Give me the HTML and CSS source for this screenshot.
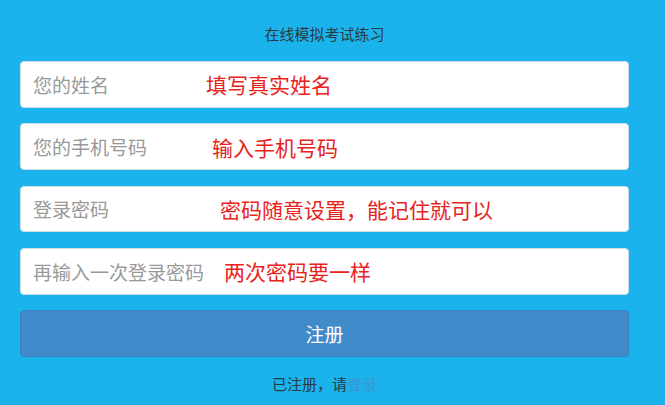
FILE: index.html
```html
<!DOCTYPE html>
<html lang="zh-CN">
<head>
<meta charset="utf-8">
<title>在线模拟考试练习</title>
<link rel="stylesheet" href="styles.css">
</head>
<body>
<div class="page">
  <h1 class="title">在线模拟考试练习</h1>
  <form class="form">
    <div class="field">
      <input class="input" type="text" placeholder="您的姓名">
      <span class="note note-1">填写真实姓名</span>
    </div>
    <div class="field">
      <input class="input" type="text" placeholder="您的手机号码">
      <span class="note note-2">输入手机号码</span>
    </div>
    <div class="field">
      <input class="input" type="password" placeholder="登录密码">
      <span class="note note-3">密码随意设置，能记住就可以</span>
    </div>
    <div class="field">
      <input class="input" type="password" placeholder="再输入一次登录密码">
      <span class="note note-4">两次密码要一样</span>
    </div>
    <button class="submit" type="button">注册</button>
  </form>
  <p class="footer">已注册，请<a class="link" href="#">登录</a></p>
</div>
</body>
</html>
```

FILE: styles.css
```css
html, body {
  margin: 0;
  padding: 0;
  background: #1bb3ec;
  font-family: "Microsoft YaHei", "Noto Sans CJK SC", "Noto Sans", sans-serif;
}
.page {
  width: 609px;
  margin-left: 20px;
  padding-top: 24px;
}
.title {
  margin: 0;
  font-size: 15px;
  line-height: 20px;
  font-weight: normal;
  color: #2b3a40;
  text-align: center;
}
.form {
  margin-top: 17px;
  display: flex;
  flex-direction: column;
  gap: 15.6px;
}
.field {
  position: relative;
  height: 46.7px;
}
.input {
  box-sizing: border-box;
  width: 100%;
  height: 100%;
  margin: 0;
  border: 1px solid #cfdfe8;
  border-radius: 4px;
  background: #fff;
  padding: 0 12px;
  font-family: inherit;
  font-size: 19px;
  color: #555;
  outline: none;
}
.input::placeholder {
  color: #999;
}
.note {
  position: absolute;
  top: 50%;
  transform: translateY(-50%);
  font-size: 21px;
  line-height: 1;
  color: #e8221c;
  white-space: nowrap;
  pointer-events: none;
}
.note-1 { left: 186px; }
.note-2 { left: 192px; }
.note-3 { left: 200px; }
.note-4 { left: 204px; }
.submit {
  box-sizing: border-box;
  height: 46.7px;
  width: 100%;
  margin: 0;
  border: 1px solid #3b80c2;
  border-radius: 4px;
  background: #428bca;
  color: #fff;
  font-family: inherit;
  font-size: 19px;
  cursor: pointer;
}
.footer {
  margin: 17px 0 0;
  font-size: 15px;
  line-height: 20px;
  text-align: center;
  color: #2b3a40;
}
.link {
  color: #3d95d1;
  text-decoration: none;
}
```
